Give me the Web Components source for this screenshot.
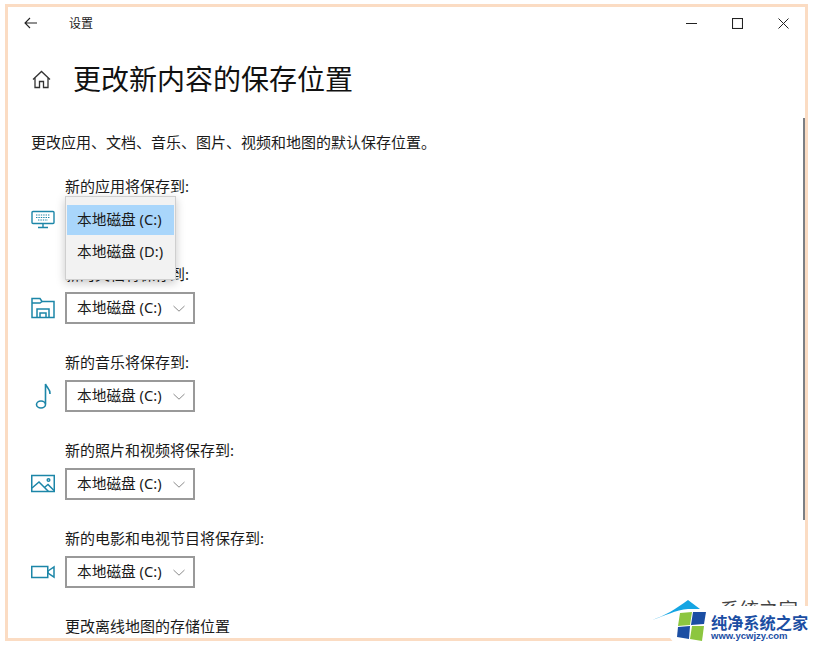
<!DOCTYPE html>
<html lang="zh">
<head>
<meta charset="utf-8">
<title>设置</title>
<style>
html, body { margin: 0; height: 100%; background: #fff; overflow: hidden; }
body { font-family: "Noto Sans", "Noto Sans CJK SC", sans-serif; color: #1a1a1a; }
</style>
</head>
<body>
<settings-window>
  <save-row label="新的应用将保存到:" open>
    <svg slot="icon" width="24" height="20" viewBox="0 0 24 20" fill="none" stroke="#1c86a8" stroke-width="1.4"><rect x="1" y="1.500" width="22" height="12" rx="1"/><path d="M12 13.500v3.500M7 17.500h10"/><path d="M5 5h14M5 7.500h14M7 10h10" stroke-dasharray="1.400 1" stroke-width="1.200"/></svg>
  </save-row>
  <save-row label="新的文档将保存到:">
    <svg slot="icon" width="24" height="24" viewBox="0 0 24 24" fill="none" stroke="#1c86a8" stroke-width="1.500"><path d="M1 21.500V2.500h8l2 3h12v16z"/><path d="M1 7h8l2-1.500"/><path d="M6 22v-9h12v9M9 22v-5h6v5"/></svg>
  </save-row>
  <save-row label="新的音乐将保存到:">
    <svg slot="icon" width="24" height="28" viewBox="0 0 24 28" fill="none" stroke="#1c86a8" stroke-width="1.600"><ellipse cx="10" cy="22.500" rx="4.500" ry="3.500"/><path d="M14.500 22V2c.5 3 5 5 4.500 10"/></svg>
  </save-row>
  <save-row label="新的照片和视频将保存到:">
    <svg slot="icon" width="24" height="20" viewBox="0 0 24 20" fill="none" stroke="#1c86a8" stroke-width="1.500"><rect x=".75" y="1.500" width="22.500" height="16"/><path d="M1 14l7-6 9.500 9.500M14 13l3-2.500 6 6"/><circle cx="17.500" cy="6" r="1.300"/></svg>
  </save-row>
  <save-row label="新的电影和电视节目将保存到:">
    <svg slot="icon" width="24" height="14" viewBox="0 0 24 14" fill="none" stroke="#1c86a8" stroke-width="1.500"><rect x=".75" y="1.500" width="16" height="11"/><path d="M17 6l6-4v10l-6-4z"/></svg>
  </save-row>
  <map-link>更改离线地图的存储位置</map-link>
</settings-window>
<site-badge></site-badge>

<script>
class SettingsWindow extends HTMLElement {
    connectedCallback() {
        this.attachShadow({ mode: 'open' });
        this.shadowRoot.innerHTML = `
            <style>
                :host {
                    display: flex;
                    flex-direction: column;
                    box-sizing: border-box;
                    position: relative;
                    width: 803px;
                    height: 637px;
                    margin: 4px 0 0 5px;
                    border: 3px solid #fbdcc3;
                    background: #fff;
                    overflow: hidden;
                }
                .bar {
                    display: flex;
                    align-items: center;
                    height: 32px;
                    flex: none;
                    font-size: 12px;
                    margin-right: -1px;
                }
                .back { width: 61px; padding-left: 16px; box-sizing: border-box; display: flex; }
                .name { flex: 1; }
                .ctl { width: 46px; display: flex; justify-content: center; }
                h1 {
                    margin: 0;
                    font-size: 28px;
                    font-weight: 400;
                    line-height: 40px;
                    color: #111;
                }
                .head {
                    display: flex;
                    align-items: center;
                    gap: 22px;
                    padding: 20px 0 0 24px;
                    flex: none;
                }
                .desc {
                    margin: 33px 0 0 23px;
                    font-size: 15px;
                    line-height: 20px;
                    flex: none;
                }
                .rows {
                    display: flex;
                    flex-direction: column;
                    gap: 28px;
                    margin-top: 24px;
                    padding-left: 23px;
                }
                .thumb {
                    position: absolute;
                    right: 0;
                    top: 111px;
                    width: 2px;
                    height: 402px;
                    background: #7c7f84;
                }
            </style>
            <div class="bar">
                <span class="back"><svg width="14" height="12" viewBox="0 0 14 12" fill="none" stroke="#222" stroke-width="1.100"><path d="M13 6H1M6 1L1 6l5 5"/></svg></span>
                <span class="name">设置</span>
                <span class="ctl"><svg width="11" height="11" viewBox="0 0 11 11" stroke="#222" stroke-width="1"><path d="M0 5.500h11"/></svg></span>
                <span class="ctl"><svg width="11" height="11" viewBox="0 0 11 11" fill="none" stroke="#222" stroke-width="1.100"><rect x=".5" y=".5" width="10" height="10"/></svg></span>
                <span class="ctl"><svg width="11" height="11" viewBox="0 0 11 11" stroke="#222" stroke-width="1"><path d="M.5.500l10 10M10.500.500l-10 10"/></svg></span>
            </div>
            <div class="head">
                <svg width="19" height="19" viewBox="0 0 19 19" fill="none" stroke="#333" stroke-width="1.300"><path d="M1 9.500L9.500 1.500 18 9.500M3 8v9.500h4.500v-6h4v6H16V8"/></svg>
                <h1>更改新内容的保存位置</h1>
            </div>
            <p class="desc">更改应用、文档、音乐、图片、视频和地图的默认保存位置。</p>
            <div class="rows"><slot></slot></div>
            <div class="thumb"></div>
        `;
    }
}

class DriveSelect extends HTMLElement {
    connectedCallback() {
        this.attachShadow({ mode: 'open' });
        this.shadowRoot.innerHTML = `
            <style>
                :host {
                    display: flex;
                    align-items: center;
                    justify-content: space-between;
                    box-sizing: border-box;
                    width: 130px;
                    height: 32px;
                    padding: 0 8px 0 10px;
                    border: 2px solid #999;
                    font-size: 14.700px;
                    white-space: nowrap;
                    color: #1a1a1a;
                }
                span { line-height: 20px; margin-top: -2px; }
            </style>
            <span>本地磁盘 (C:)</span>
            <svg width="12" height="7" viewBox="0 0 12 7" fill="none" stroke="#8a8a8a" stroke-width="1"><path d="M.5 1L6 6.200 11.500 1"/></svg>
        `;
    }
}

class DriveMenu extends HTMLElement {
    connectedCallback() {
        this.attachShadow({ mode: 'open' });
        this.shadowRoot.innerHTML = `
            <style>
                :host {
                    display: block;
                    position: absolute;
                    left: 0;
                    top: -8px;
                    box-sizing: border-box;
                    width: 111px;
                    height: 84px;
                    padding: 8px 0 0 1px;
                    background: #f2f2f2;
                    border: 1px solid #cfcfcf;
                    box-shadow: 0 3px 9px rgba(0, 0, 0, .22);
                    font-size: 14.700px;
                    color: #1a1a1a;
                    white-space: nowrap;
                    z-index: 5;
                }
                div { height: 32px; line-height: 28px; padding-left: 10px; margin-right: 1px; }
                .on { height: 30px; margin-bottom: 2px; background: #a9d6fb; }
            </style>
            <div class="on">本地磁盘 (C:)</div>
            <div>本地磁盘 (D:)</div>
        `;
    }
}

class SaveRow extends HTMLElement {
    connectedCallback() {
        this.attachShadow({ mode: 'open' });
        const open = this.hasAttribute('open');
        // the open dropdown replaces the closed select and leaves its space
        const control = open
            ? '<drive-menu></drive-menu>'
            : '<drive-select></drive-select>';
        this.shadowRoot.innerHTML = `
            <style>
                :host {
                    display: grid;
                    grid-template-columns: 34px auto;
                    grid-template-rows: 20px 32px;
                    row-gap: 8px;
                    font-size: 15px;
                    line-height: 20px;
                    color: #1a1a1a;
                }
                .label { grid-column: 2; white-space: nowrap; }
                .icon { grid-column: 1; grid-row: 2; display: flex; align-items: center; }
                .ctl { grid-column: 2; grid-row: 2; position: relative; }
            </style>
            <div class="label">${this.getAttribute('label')}</div>
            <div class="icon"><slot name="icon"></slot></div>
            <div class="ctl">${control}</div>
        `;
    }
}

class MapLink extends HTMLElement {
    connectedCallback() {
        this.attachShadow({ mode: 'open' });
        this.shadowRoot.innerHTML = `
            <style>
                :host { display: block; padding-left: 34px; font-size: 15px; line-height: 20px; color: #1a1a1a; }
            </style>
            <slot></slot>
        `;
    }
}

// watermark sits over the bottom right corner of the window
class SiteBadge extends HTMLElement {
    connectedCallback() {
        this.attachShadow({ mode: 'open' });
        this.shadowRoot.innerHTML = `
            <style>
                :host {
                    display: block;
                    position: absolute;
                    left: 652px;
                    top: 598px;
                    width: 162px;
                    height: 48px;
                }
                .old {
                    position: absolute;
                    left: 68px;
                    top: 0;
                    height: 8px;
                    overflow: hidden;
                    font: 400 19.500px/22px "Noto Sans CJK SC", sans-serif;
                    color: #444;
                    white-space: nowrap;
                }
                .back {
                    position: absolute;
                    left: 14px;
                    top: 8px;
                    width: 142px;
                    height: 40px;
                    background: #fff;
                    border-radius: 22px 0 0 22px;
                }
                svg { position: absolute; left: 0; top: 0; }
                .name {
                    position: absolute;
                    left: 59px;
                    top: 13px;
                    font: 700 16.200px/22px "Noto Sans CJK SC", sans-serif;
                    color: #1b4ea3;
                    white-space: nowrap;
                }
                .url {
                    position: absolute;
                    left: 59px;
                    top: 32px;
                    font: 700 9.500px/12px "Liberation Sans", sans-serif;
                    color: #1b4ea3;
                    white-space: nowrap;
                }
            </style>
            <div class="old">系统之家</div>
            <div class="back"></div>
            <svg width="60" height="48" viewBox="0 0 60 48">
                <path d="M0 22C12 18 24 11 36 2l12 9H36C24 12 12 18 0 22z" fill="#15a5e3"/>
                <path d="M28 15l12-1-2 13-12 1z" fill="#8cc63f"/>
                <path d="M41 14l13 0-2 12-13 1z" fill="#1b4ea3"/>
                <path d="M26 29l12-1-1 13-12-2z" fill="#1b4ea3"/>
                <path d="M40 28l12 0-2 15-12-2z" fill="#8cc63f"/>
            </svg>
            <div class="name">纯净系统之家</div>
            <div class="url">www.ycwjzy.com</div>
        `;
    }
}

customElements.define('drive-select', DriveSelect);
customElements.define('drive-menu', DriveMenu);
customElements.define('save-row', SaveRow);
customElements.define('map-link', MapLink);
customElements.define('settings-window', SettingsWindow);
customElements.define('site-badge', SiteBadge);
</script>
</body>
</html>
